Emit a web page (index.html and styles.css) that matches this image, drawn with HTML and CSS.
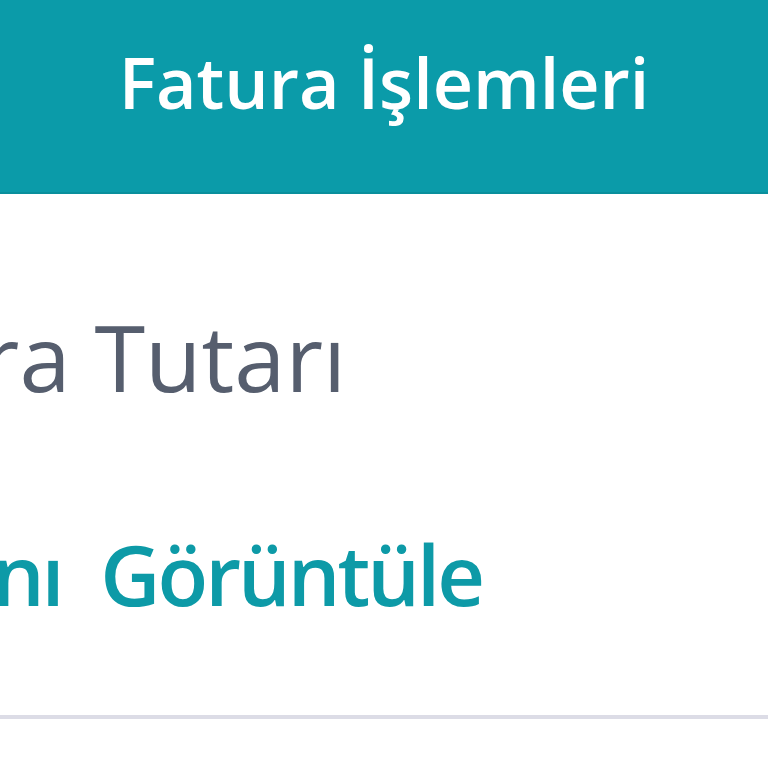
FILE: index.html
```html
<!DOCTYPE html>
<html lang="tr">
<head>
<meta charset="utf-8">
<link rel="stylesheet" href="styles.css">
</head>
<body>
<header class="topbar">
  <h1 class="topbar-title">Fatura İşlemleri</h1>
</header>
<main class="content">
  <section class="item">
    <p class="amount-label">Fatura Tutarı</p>
    <a class="view-link">Faturanı Görüntüle</a>
  </section>
</main>
</body>
</html>
```
FILE: styles.css
```css
html, body {
  margin: 0;
  padding: 0;
  background: #ffffff;
  overflow: hidden;
}
body {
  width: 768px;
  height: 768px;
  font-family: "Open Sans", Lato, sans-serif;
}
.topbar {
  height: 194px;
  background: #0b9ba9;
  border-bottom: 2px solid #0a8f9c;
  display: flex;
  justify-content: center;
  align-items: flex-start;
  box-sizing: border-box;
}
.topbar-title {
  margin: 0;
  padding-top: 40px;
  color: #ffffff;
  font-size: 70px;
  font-weight: 600;
  line-height: 84px;
}
.content {
  overflow: hidden;
}
.item {
  display: flex;
  flex-direction: column;
  align-items: flex-start;
  padding-top: 108px;
  height: 413px;
  border-bottom: 4px solid #dcdce6;
}
.amount-label {
  margin: 0 0 0 -206px;
  color: #565e6e;
  font-size: 92px;
  font-weight: 400;
  line-height: 110px;
  white-space: nowrap;
}
.view-link {
  margin: 109px 0 0 -252px;
  color: #0d9aa7;
  font-size: 83px;
  font-weight: 600;
  letter-spacing: -3px;
  word-spacing: 20px;
  line-height: 106px;
  white-space: nowrap;
}
```
